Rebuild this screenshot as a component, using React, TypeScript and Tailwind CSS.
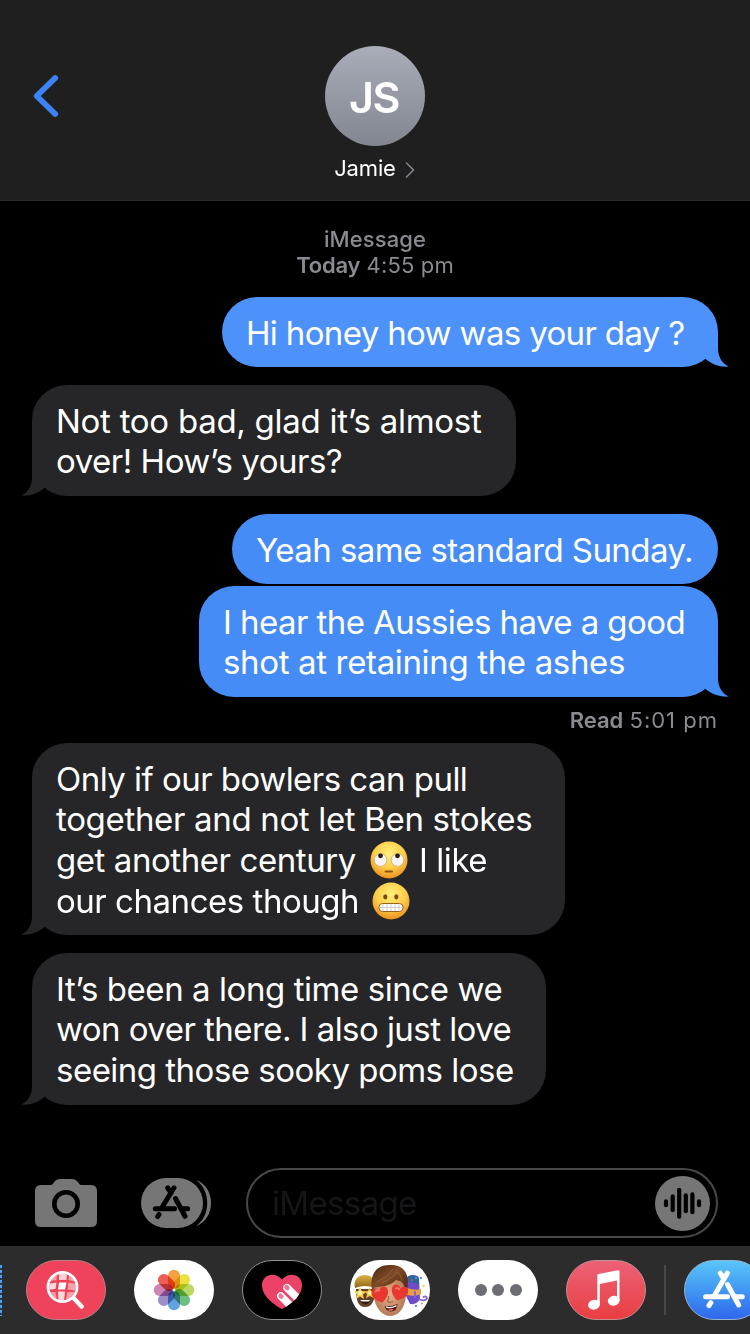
import React from "react";

type Line = { content: React.ReactNode; tracking: string };

function Tail({ className }: { className: string }) {
  return (
    <svg viewBox="0 0 30 34" className={`absolute bottom-0 h-[34px] w-[30px] ${className}`}>
      <path d="M19 0V15C19 24 23 30.500 30 33.600C21 34.500 12 31 6 25.500L8 10Z" />
    </svg>
  );
}

function Bubble({ side, size, lines, tail = true, light = false }: { side: "left" | "right"; size: string; lines: Line[]; tail?: boolean; light?: boolean }) {
  const right = side === "right";
  const blue = light ? "bg-[#4d92fa]" : "bg-[#468cf7]";
  const blueFill = light ? "fill-[#4d92fa]" : "fill-[#468cf7]";
  return (
    <div
      className={`relative flex flex-col rounded-[35px] pl-6 pt-[15.7px] text-[33px] leading-[40.7px] text-white ${size} ${
        right ? `self-end ${blue}` : "self-start bg-[#262628]"
      }`}
    >
      {lines.map((line, i) => (
        <div key={i} className={`flex h-[40.7px] items-center whitespace-pre ${line.tracking}`}>
          {line.content}
        </div>
      ))}
      {tail && <Tail className={right ? `-right-[11px] ${blueFill}` : "-left-[11px] -scale-x-100 fill-[#262628]"} />}
    </div>
  );
}

function EmojiDefs() {
  return (
    <defs>
      <radialGradient id="face" cx=".5" cy=".32" r=".7">
        <stop offset="0" stopColor="#fff07a" />
        <stop offset=".55" stopColor="#fdcf4a" />
        <stop offset="1" stopColor="#ec8d1e" />
      </radialGradient>
    </defs>
  );
}

function EyeRoll() {
  return (
    <svg viewBox="0 0 38 38" className="h-[38px] w-[38px] shrink-0" role="img" aria-label="🙄">
      <EmojiDefs />
      <circle cx="19" cy="19" r="18.500" fill="url(#face)" />
      <circle cx="10.500" cy="19" r="6.400" fill="#f6f4f2" stroke="#cfa86c" strokeWidth=".8" />
      <circle cx="27.500" cy="19" r="6.400" fill="#f6f4f2" stroke="#cfa86c" strokeWidth=".8" />
      <circle cx="10.500" cy="14.800" r="2.400" fill="#2d1a0d" />
      <circle cx="27.500" cy="14.800" r="2.400" fill="#2d1a0d" />
      <rect x="14.500" y="29.500" width="8.500" height="2" rx="1" fill="#8b5414" />
    </svg>
  );
}

function Grimace() {
  return (
    <svg viewBox="0 0 38 38" className="h-[38px] w-[38px] shrink-0" role="img" aria-label="😬">
      <circle cx="19" cy="19" r="18.500" fill="url(#face)" />
      <ellipse cx="13.300" cy="14.800" rx="2.100" ry="2.600" fill="#80460f" />
      <ellipse cx="24.300" cy="14.800" rx="2.100" ry="2.600" fill="#80460f" />
      <rect x="7" y="21.500" width="24" height="8" rx="3.500" fill="#fff" stroke="#98611d" strokeWidth="1" />
      <path d="M7.500 25.500H30.500M11 22V29M15 22V29M19 22V29M23 22V29M27 22V29" stroke="#c9c5c0" strokeWidth=".8" />
    </svg>
  );
}

function StoreGlyph() {
  return (
    <svg viewBox="0 0 42 40" className="h-10 w-[42px] shrink-0" fill="none" stroke="#fff" strokeWidth="5" strokeLinecap="round">
      <path d="M17.300 3.200L20.500 8.500M24.300 3.200L11.700 25M2.600 26.700H24.500" />
      <path d="M24.500 14.500L35.700 35M33 26.700H39.300M7.900 32.700L6 35.500" />
    </svg>
  );
}

function Pill({ className, children }: { className: string; children: React.ReactNode }) {
  return (
    <div className={`mr-7 flex h-[60px] w-20 shrink-0 items-center justify-center overflow-hidden rounded-[30px] ${className}`}>
      {children}
    </div>
  );
}

function SearchGlyph() {
  return (
    <svg viewBox="0 0 80 60" className="h-[60px] w-20 shrink-0" fill="none">
      <clipPath id="globe"><circle cx="36.500" cy="27" r="13.300" /></clipPath>
      <g clipPath="url(#globe)" fill="#fff">
        <rect x="22" y="13" width="29" height="29" fill="#ef4358" />
        <path d="M23 14L31 12L30.500 20L24 21Z" opacity=".5" />
        <path d="M33 12L41 13L40.500 20L33 20Z" opacity=".75" />
        <path d="M43 14L50 18L50 22L42.500 20Z" opacity=".5" />
        <path d="M22 24L30.500 22.500L29.500 29L22 30Z" opacity=".8" />
        <path d="M33 22.500H40.500L39 29.500H32Z" />
        <path d="M42.500 22.500L51 24V31L41.500 29.500Z" opacity=".5" />
        <path d="M22 32H29.500L30.500 38L25 38Z" opacity=".45" />
        <path d="M32 31.500H39L38 41H32.500Z" opacity=".8" />
        <path d="M41.500 32H49L43 40L40 39Z" opacity=".5" />
      </g>
      <circle cx="36.500" cy="27" r="14.600" stroke="#fff" strokeWidth="2.700" />
      <path d="M48 38.500L55.600 46.500" stroke="#fff" strokeWidth="4.500" strokeLinecap="round" />
    </svg>
  );
}

const petals = ["#f39a2e", "#ecdf31", "#b5d455", "#62b878", "#559bdb", "#9583c3", "#c77cae", "#ea5145"];

function PhotosGlyph() {
  return (
    <svg viewBox="0 0 42 42" className="h-[42px] w-[42px]">
      {petals.map((color, i) => (
        <rect
          key={color}
          x="15"
          y=".7"
          width="12"
          height="19.300"
          rx="6"
          fill={color}
          opacity=".92"
          className="mix-blend-multiply"
          transform={`rotate(${i * 45} 21 21)`}
        />
      ))}
      <circle cx="21" cy="21" r="1.300" fill="#fff" />
    </svg>
  );
}

function TouchGlyph() {
  return (
    <svg viewBox="0 0 80 60" className="h-[60px] w-20 shrink-0">
      <clipPath id="heart">
        <path d="M40 49C35 46.500 20 37.500 20 25C20 14.500 33 11 40 19.500C47 11 60 14.500 60 25C60 37.500 45 46.500 40 49Z" />
      </clipPath>
      <g clipPath="url(#heart)">
        <rect x="18" y="12" width="44" height="38" fill="#ed4268" />
        <path d="M38.800 36L54 51.200M45 27.700L63 45.700" stroke="#fff" strokeWidth="7.600" strokeLinecap="round" />
        <path d="M38.600 35.800L39.400 36.600M44.500 27.200L45.300 28" stroke="#ee7b95" strokeWidth="4.600" strokeLinecap="round" />
      </g>
    </svg>
  );
}

function MemojiGlyph() {
  const heart = "M0 8.500C-4 6 -8.800 2 -8.300 -2.800C-7.800 -7.600 -2 -8 0 -3.800C2 -8 7.800 -7.600 8.300 -2.800C8.800 2 4 6 0 8.500Z";
  return (
    <svg viewBox="0 0 80 60" className="h-[60px] w-20 shrink-0">
      <defs>
        <linearGradient id="hair" x1="0" y1="0" x2="1" y2="1">
          <stop offset="0" stopColor="#4a260f" /><stop offset=".45" stopColor="#7e4a28" /><stop offset="1" stopColor="#4a230d" />
        </linearGradient>
        <radialGradient id="skin"><stop offset="0" stopColor="#e6b08a" /><stop offset="1" stopColor="#b67a57" /></radialGradient>
        <linearGradient id="beanie" x1="0" y1="0" x2="0" y2="1"><stop offset="0" stopColor="#ddb142" /><stop offset="1" stopColor="#8d6817" /></linearGradient>
      </defs>
      <path d="M6 29C6 42 9 47 15 47C22 47 25 41 25 29Z" fill="#62402b" />
      <path d="M5 28C3 20 8 15 15 15C21 15 26 19 25 28Q15 24 5 28Z" fill="url(#beanie)" />
      <path d="M10 27L11.800 31L16.500 31.500L13 34.500L14 39L10 36.500L6 39L7 34.500L4 31.500L8.200 31Z" fill="#f7cd50" />
      <path d="M19.500 27L21 31L24 31.500V38L19.500 36L16 38.500L17 34L14.500 31.500L18 31Z" fill="#f2c340" />
      <circle cx="10" cy="33" r="2.200" fill="#fff2a4" /><circle cx="20" cy="33" r="2" fill="#fff2a4" />
      <path d="M10 40H20Q17 46 10 40Z" fill="#fff" /><path d="M11 41.500H20Q16 47 11 41.500Z" fill="#331b14" />
      <path d="M57 18C58 14 68 14 69 18L70 39Q67 45 60 44L55 34Z" fill="#704bc5" />
      <path d="M57 21V17C60 14.500 66 15 68 18L69 24Z" fill="#28669b" />
      <path d="M57 28Q65 31 71 29V34Q65 37 57 35Z" fill="#e6a043" />
      <circle cx="62" cy="20" r="1" fill="#e44b62" /><circle cx="66" cy="18" r="1" fill="#3cb7e5" />
      <path d="M65 31V38M68 39Q76 42 77 38Q76 35 73 37.500" stroke="#8461d5" strokeWidth="1.800" fill="none" />
      <circle cx="71" cy="18" r="1.100" fill="#3f71dd" /><circle cx="73.500" cy="26" r="1.200" fill="#eadb4a" />
      <circle cx="66" cy="46" r="1" fill="#3f71dd" /><circle cx="72" cy="43.500" r="1" fill="#ed9146" />
      <path d="M23 25C22 45 31 56 40 56C50 56 58 45 56 24C53 10 26 10 23 25Z" fill="url(#skin)" />
      <path d="M22.500 32C19 18 24 5 39 5C54 4 61 14 56.500 32L54.500 27C53 22 51 21 46 20C40 26 32 27 25 27Z" fill="url(#hair)" />
      <path d="M26 22Q37 18 43 9M32 23Q44 17 47 12M52 21Q51 14 46 10" stroke="#b58052" strokeWidth=".8" fill="none" opacity=".6" />
      <path d="M39 36L37.500 41.500Q40 43.500 43 41.500" stroke="#93563d" fill="none" />
      <path d="M34.500 46Q41 47 47.500 44Q47 52 40 51.500Q36 50.500 34.500 46Z" fill="#4d1615" />
      <path d="M35.500 46.300Q41 48 46.500 45V46.500Q41 49 36.500 48Z" fill="#fff" /><path d="M38 50Q41 47.500 44 49.800Q41 52 38 50Z" fill="#dd6668" />
      <path d={heart} transform="translate(30.300 34.300) rotate(-15)" fill="#e93730" />
      <path d={heart} transform="translate(49.500 32.300) rotate(15)" fill="#e93730" />
      <path d="M25.500 32Q27 28.500 29 31M46 28.500Q48.500 27 49 29.500" stroke="#ff8277" strokeWidth="1.600" fill="none" strokeLinecap="round" />
    </svg>
  );
}

const wave = [
  { x: 11, h: 8 }, { x: 17.7, h: 18 }, { x: 24.2, h: 31 }, { x: 30.8, h: 20 }, { x: 37.4, h: 22 }, { x: 44, h: 8 },
];

export default function App() {
  return (
    <div className="flex h-[1334px] w-[750px] flex-col overflow-hidden bg-black font-['Inter',sans-serif] text-white">
      <header className="grid h-[201px] shrink-0 grid-cols-[1fr_100px_1fr] border-b border-[#2b2b2c] bg-[#1f1f1f] pt-[46px]">
        <svg viewBox="0 0 26 44" className="ml-[33px] mt-7 h-11 w-[26px]" fill="none" stroke="#3b83f6" strokeWidth="5.800" strokeLinecap="round" strokeLinejoin="round">
          <path d="M22.200 4L3.700 22L22.200 40" />
        </svg>
        <div className="flex flex-col items-center">
          <div className="flex h-[100px] w-[100px] items-center justify-center rounded-full bg-linear-to-b from-[#a9adb9] to-[#82868f] pr-0.5 pt-0.5 text-[43px] font-semibold tracking-[-1.5px]">JS</div>
          <div className="mr-px mt-2 flex h-7 items-center gap-[9px] whitespace-nowrap text-[22px] tracking-[-0.15px]">
            Jamie
            <svg viewBox="0 0 10 16" className="mt-1 h-4 w-2.5" fill="none" stroke="#83858c" strokeWidth="1.600" strokeLinecap="round">
              <path d="M1.500 1L8.500 8L1.500 15" />
            </svg>
          </div>
        </div>
      </header>

      <main className="flex h-[967px] shrink-0 flex-col pl-8 pr-8">
        <div className="mt-[25px] flex h-[71px] flex-col items-center text-[22px] leading-[26px] text-[#8a8a90]">
          <div className="font-medium tracking-[0.1px]">iMessage</div>
          <div><b className="font-semibold tracking-[-0.2px]">Today</b> <span className="tracking-[0.15px]">4:55 pm</span></div>
        </div>
        <Bubble light side="right" size="h-[70px] w-[496px]" lines={[{ content: "Hi honey how was your day ?", tracking: "tracking-[-0.65px]" }]} />
        <Bubble side="left" size="mt-[18px] h-[111px] w-[484px]" lines={[
          { content: "Not too bad, glad it’s almost", tracking: "tracking-[-0.27px]" },
          { content: "over! How’s yours?", tracking: "tracking-[-0.48px]" },
        ]} />
        <Bubble side="right" tail={false} size="mt-[18px] h-[70px] w-[486px]" lines={[{ content: "Yeah same standard Sunday.", tracking: "tracking-[-0.57px]" }]} />
        <Bubble side="right" size="mt-0.5 h-[111px] w-[519px]" lines={[
          { content: "I hear the Aussies have a good", tracking: "tracking-[-0.57px]" },
          { content: "shot at retaining the ashes", tracking: "tracking-[-0.35px]" },
        ]} />
        <div className="flex h-[46px] items-center justify-end text-[22px] text-[#8a8a90]">
          <span><b className="font-semibold">Read</b> <span className="tracking-[1px]">5:01 pm</span></span>
        </div>
        <Bubble side="left" size="h-[192px] w-[533px]" lines={[
          { content: "Only if our bowlers can pull", tracking: "tracking-[-0.53px]" },
          { content: "together and not let Ben stokes", tracking: "tracking-[-0.33px]" },
          { content: <><span className="w-[313.5px]">get another century </span><EyeRoll /><span className="ml-[11.5px]">I like</span></>, tracking: "tracking-[-0.43px]" },
          { content: <><span className="w-[315.5px]">our chances though </span><Grimace /></>, tracking: "tracking-[-0.47px]" },
        ]} />
        <Bubble side="left" size="mt-[18px] h-[152px] w-[514px]" lines={[
          { content: "It’s been a long time since we", tracking: "tracking-[-0.43px]" },
          { content: "won over there. I also just love", tracking: "tracking-[-0.55px]" },
          { content: "seeing those sooky poms lose", tracking: "tracking-[-0.51px]" },
        ]} />
      </main>

      <div className="flex h-[78px] shrink-0 items-start pl-[35px]">
        <svg viewBox="0 0 62 48" className="mt-[11px] h-12 w-[62px]">
          <path d="M6 6H15C18 6 18 4 20 2Q22 0 25 0H37Q40 0 42 2C44 4 44 6 47 6H56Q62 6 62 12V42Q62 48 56 48H6Q0 48 0 42V12Q0 6 6 6Z" fill="#767676" />
          <circle cx="31" cy="25" r="11.700" fill="none" stroke="#000" strokeWidth="4.600" />
        </svg>
        <svg viewBox="0 0 70 50" className="ml-11 mt-2.5 h-[50px] w-[70px]">
          <path d="M55 2C75 9 75 41 55 48C70 38 70 12 55 2Z" fill="#767676" />
          <rect width="62" height="50" rx="25" fill="#767676" />
          <path
            d="M26.700 9.800L30 15M33 9.800L21.300 29M14.300 30.700H33.500M34.500 20.500L44 38.300M42 30.700H46.700M18 36.500L16.700 38.500"
            fill="none" stroke="#000" strokeWidth="5" strokeLinecap="round"
          />
        </svg>
        <div className="ml-[35px] flex h-[70px] w-[472px] items-center justify-between rounded-full border-2 border-[#48484a] pl-6 pr-1.5">
          <span className="pt-px text-[33px] tracking-[-0.65px] text-[#161618]">iMessage</span>
          <svg viewBox="0 0 55 55" className="h-[55px] w-[55px]">
            <circle cx="27.500" cy="27.500" r="27.500" fill="#767676" />
            {wave.map((bar) => (
              <rect key={bar.x} x={bar.x - 2.1} y={27.3 - bar.h / 2} width="4.200" height={bar.h} rx="2.100" />
            ))}
          </svg>
        </div>
      </div>

      <footer className="flex h-[88px] shrink-0 items-start bg-[#2c2c2c] pt-3.5">
        <div className="mr-6 mt-[5px] h-[51px] w-0.5 shrink-0 bg-[repeating-linear-gradient(#50aef0_0px,#4a91f0_3px,#2c3b50_3px,#2c3b50_5px)]" />
        <Pill className="border border-[#b98087] bg-[#ee435b]"><SearchGlyph /></Pill>
        <Pill className="bg-white"><PhotosGlyph /></Pill>
        <Pill className="border border-[#909090] bg-black"><TouchGlyph /></Pill>
        <Pill className="bg-white"><MemojiGlyph /></Pill>
        <Pill className="gap-[5.5px] bg-white">
          <span className="h-3 w-3 rounded-full bg-[#6d6d75]" />
          <span className="h-3 w-3 rounded-full bg-[#6d6d75]" />
          <span className="h-3 w-3 rounded-full bg-[#6d6d75]" />
        </Pill>
        <div className="mr-[18px] flex h-[60px] w-20 shrink-0 items-center justify-center rounded-[30px] border border-[#c39094] bg-linear-to-b from-[#ec6177] to-[#e93d40]">
          <svg viewBox="0 0 32 40" className="mr-[5px] h-10 w-8 fill-white">
            <path d="M9.300 5.500Q9.300 4.200 10.600 3.900L30 .200Q31.500 0 31.500 1.400V31H29V10.500L11.800 14V35H9.300Z" />
            <ellipse cx="6" cy="34.800" rx="5.900" ry="4.900" transform="rotate(-12 6 34.800)" />
            <ellipse cx="25.700" cy="30.800" rx="5.900" ry="4.900" transform="rotate(-12 25.700 30.800)" />
          </svg>
        </div>
        <div className="mr-[18px] mt-[5px] h-[50px] w-0.5 shrink-0 bg-[#48484a]" />
        <div className="flex h-[60px] w-20 shrink-0 items-center justify-center rounded-[30px] border border-[#92b5cf] bg-linear-to-b from-[#5bc5f8] to-[#3166eb]">
          <StoreGlyph />
        </div>
      </footer>
    </div>
  );
}
